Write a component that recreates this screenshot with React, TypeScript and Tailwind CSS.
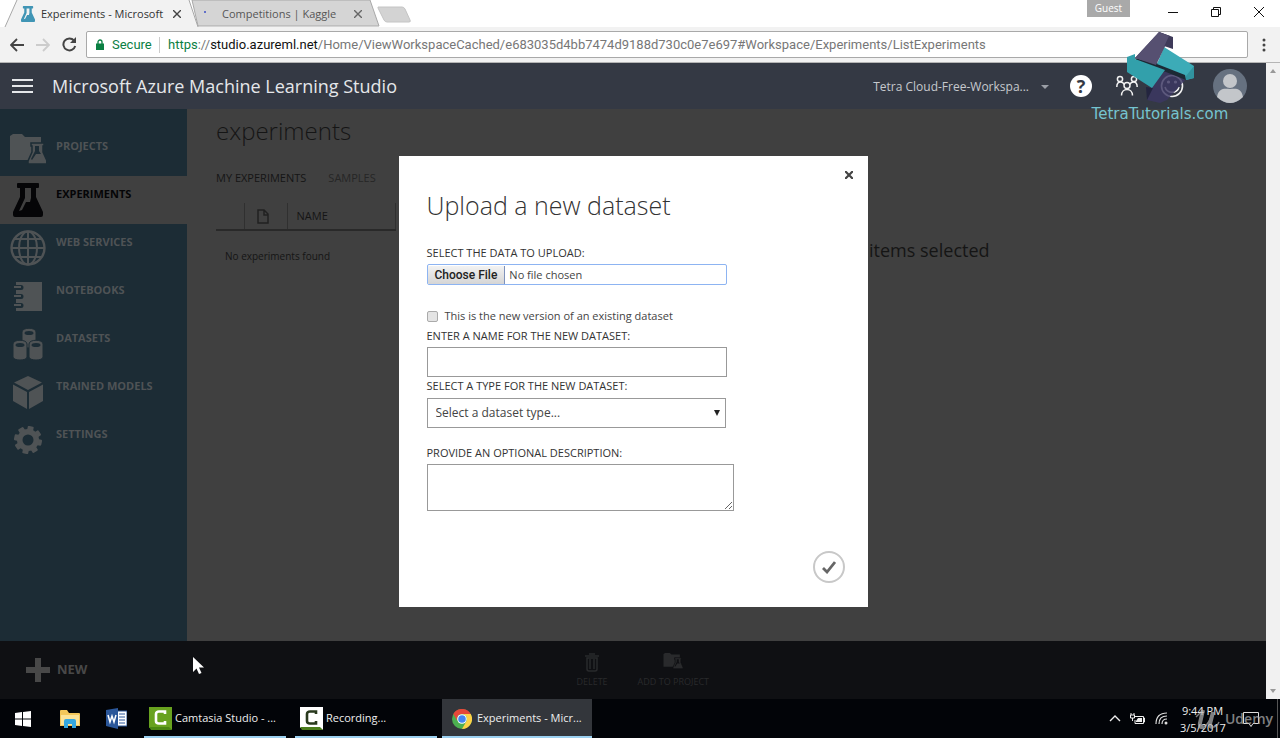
import React from "react";

function Flask({ className, fill = "currentColor" }: { className?: string; fill?: string }) {
  return (
    <svg viewBox="0 0 30 34" className={className} aria-hidden="true">
      <path
        fillRule="evenodd"
        fill={fill}
        d="M5 0h20a1 1 0 0 1 1 1v3a1 1 0 0 1-1 1h-2v9l7 15v3a2 2 0 0 1-2 2H2a2 2 0 0 1-2-2v-3l7-15V5H5a1 1 0 0 1-1-1V1a1 1 0 0 1 1-1zM12 5v10L6 28l3-1 4-8h4l1-4V5z"
      />
    </svg>
  );
}

function FolderFlask({ className, gap = "#1c2c35" }: { className?: string; gap?: string }) {
  return (
    <svg viewBox="0 0 36 36" className={className} aria-hidden="true">
      <path fill="currentColor" d="M0 2 3 0h9l3 3h16v23H0z" />
      <path fill="currentColor" stroke={gap} strokeWidth="1.5" d="M21 9h13v3h-1v6l4 9v3H18v-3l4-9v-6h-1z" />
      <path fill={gap} d="M25 12h4v5l2 3h-5l-4 6-1-1 4-8z" />
    </svg>
  );
}

function Globe({ className }: { className?: string }) {
  return (
    <svg viewBox="0 0 36 36" className={className} fill="none" stroke="currentColor" strokeWidth="2" aria-hidden="true">
      <circle cx="18" cy="18" r="16.5" strokeWidth="2.4" />
      <ellipse cx="18" cy="18" rx="9" ry="16.5" />
      <path d="M18 1v34M1 18h34M4 9h28M4 27h28" />
    </svg>
  );
}

function Notebook({ className }: { className?: string }) {
  return (
    <svg viewBox="0 0 28 29" className={className} aria-hidden="true">
      <path fill="currentColor" d="M2 0h26v29H2v-3h5a2 2 0 0 0 0-5H2v-4h5a2 2 0 0 0 0-5H2V8h5a2 2 0 0 0 0-5H2z" />
      <path fill="none" stroke="currentColor" strokeWidth="2" d="M0 5h7M0 14h7M0 23h7" />
    </svg>
  );
}

function Cylinders({ className }: { className?: string }) {
  const positions = [
    [9, 0],
    [0, 12],
    [16, 12],
  ];
  return (
    <svg viewBox="0 0 31 33" className={className} aria-hidden="true">
      {positions.map(([x, y]) => (
        <g key={`${x}-${y}`} transform={`translate(${x} ${y})`}>
          <path fill="currentColor" stroke="#1c2c35" d="M0 4c0-5 14-5 14 0v13c0 4-14 4-14 0z" />
          <ellipse cx="7" cy="5" rx="4.5" ry="2" fill="#1c2c35" />
        </g>
      ))}
    </svg>
  );
}

function Cube({ className }: { className?: string }) {
  return (
    <svg viewBox="0 0 30 33" className={className} fill="currentColor" aria-hidden="true">
      <path d="M15 0 29 6.5 15 14 1 6.5zM0 8.5l14 7.5v17L0 25zM30 8.5 16 16v17l14-8z" />
    </svg>
  );
}

function Gear({ className }: { className?: string }) {
  return (
    <svg viewBox="0 0 28 28" className={className} aria-hidden="true">
      {[0, 45, 90, 135].map((a) => (
        <rect key={a} x="11" y="0" width="6" height="28" rx="1" fill="currentColor" transform={`rotate(${a + 12} 14 14)`} />
      ))}
      <circle cx="14" cy="14" r="11" fill="currentColor" />
      <circle cx="14" cy="14" r="5.5" fill="#1c2c35" />
    </svg>
  );
}

function BrowserTabs() {
  return (
    <div className="flex h-[27px] items-start bg-white text-[11px] leading-[26px]">
      <div className="relative ml-1 flex h-[27px] w-[188px] shrink-0 items-center">
        <svg viewBox="0 0 376 27" className="absolute left-0 top-0 h-[27px] w-[376px]" aria-hidden="true">
          <path d="M188 0h178l9 26H194z" fill="#d5d5d5" stroke="#a8a8a8" />
          <path d="M1 27 13 0h172l9 27z" fill="#f2f2f2" />
          <path d="M1 27 13 0M185 0l9 27" fill="none" stroke="#a8a8a8" />
        </svg>
        <Flask className="relative ml-[17px] h-4 w-[14px]" fill="#4095b5" />
        <span className="relative ml-[6px] w-[124px] whitespace-nowrap text-[#333]">Experiments - Microsoft</span>
        <button aria-label="Close Experiments tab" className="relative ml-2">
          <svg viewBox="0 0 8 8" className="h-2 w-2" stroke="#444" strokeWidth="1.4"><path d="m0 0 8 8M8 0 0 8" /></svg>
        </button>
      </div>
      <div className="relative flex h-[27px] w-[185px] shrink-0 items-center">
        <span className="mb-1 ml-3 h-[2px] w-[2px] bg-[#6270c9]" />
        <span className="ml-4 w-[126px] whitespace-nowrap text-[#555]">Competitions | Kaggle</span>
        <button aria-label="Close Competitions tab" className="ml-[6px]">
          <svg viewBox="0 0 8 8" className="h-2 w-2" stroke="#666" strokeWidth="1.4"><path d="m0 0 8 8M8 0 0 8" /></svg>
        </button>
      </div>
      <button aria-label="New tab" className="mt-[6px]">
        <svg viewBox="0 0 34 17" className="h-[17px] w-[34px]"><path d="M1 1h24q2 0 3 2l5 11q1 2-1 2H10q-2 0-3-2L1 2z" fill="#d3d3d3" stroke="#c4c4c4" /></svg>
      </button>
      <div className="ml-auto flex items-start">
        <span className="mr-[22px] h-[17px] w-[43px] bg-[#a9a9a9] text-center text-[10px] leading-4 text-white">Guest</span>
        <button aria-label="Minimize" className="flex h-6 w-[42px] items-center justify-center"><svg viewBox="0 0 10 10" className="h-[10px] w-[10px]" stroke="#111"><path d="M0 5.5h10" /></svg></button>
        <button aria-label="Restore" className="flex h-6 w-[43px] items-center justify-center"><svg viewBox="0 0 10 10" className="h-[10px] w-[10px]" fill="none" stroke="#111"><path d="M.5 2.5h7v7h-7zM2.5 2.5v-2h7v7h-2" /></svg></button>
        <button aria-label="Close" className="flex h-6 w-[43px] items-center justify-center"><svg viewBox="0 0 10 10" className="h-[10px] w-[10px]" stroke="#111"><path d="m0 0 10 10M10 0 0 10" /></svg></button>
      </div>
    </div>
  );
}

function AddressBar() {
  return (
    <div className="flex h-9 items-center border-b border-[#b5b5b5] bg-[#f2f2f2] pl-[10px]">
      <button aria-label="Back"><svg viewBox="0 0 14 14" className="h-[14px] w-[14px]" fill="none" stroke="#444" strokeWidth="1.8"><path d="M14 7H1M7 1 1 7l6 6" /></svg></button>
      <button aria-label="Forward" className="ml-3"><svg viewBox="0 0 14 14" className="h-[14px] w-[14px]" fill="none" stroke="#ccc" strokeWidth="1.8"><path d="M0 7h13M7 1l6 6-6 6" /></svg></button>
      <button aria-label="Reload" className="ml-3"><svg viewBox="0 0 15 15" className="h-[15px] w-[15px]" fill="none" stroke="#444" strokeWidth="2"><path d="M12 3.5A6 6 0 1 0 13.2 9" /><path d="M14 0v6H8z" fill="#444" stroke="none" /></svg></button>
      <div className="ml-[9px] flex h-[27px] flex-1 items-center rounded-[2px] border border-[#a9a9a9] bg-white pl-[9px] font-['Roboto',sans-serif] text-[13px] text-[#777]">
        <svg viewBox="0 0 8 11" className="h-[11px] w-2" aria-hidden="true"><path d="M2 5V3a2 2 0 0 1 4 0v2" fill="none" stroke="#0b8043" strokeWidth="1.3" /><path d="M0 4.5h8V11H0z" fill="#0b8043" /></svg>
        <span className="ml-2 w-12 border-r border-[#ccc] leading-4 text-[#0b8043]">Secure</span>
        <span className="ml-2 whitespace-nowrap"><span className="text-[#0b8043]">https</span>://<span className="text-[#111]">studio.azureml.net</span>/Home/ViewWorkspaceCached/e683035d4bb7474d9188d730c0e7e697#Workspace/Experiments/ListExperiments</span>
      </div>
      <button aria-label="Browser menu" className="flex w-8 justify-center"><svg viewBox="0 0 4 14" className="h-[14px] w-1" fill="#444"><circle cx="2" cy="2" r="1.5" /><circle cx="2" cy="7" r="1.5" /><circle cx="2" cy="12" r="1.5" /></svg></button>
    </div>
  );
}

function StudioHeader() {
  return (
    <header className="relative flex h-[46px] items-center bg-[#343944] pl-3 text-[#e5e7ea]">
      <button aria-label="Menu" className="flex w-[21px] flex-col gap-1">
        <span className="h-[2px] bg-[#e5e7ea]" /><span className="h-[2px] bg-[#e5e7ea]" /><span className="h-[2px] bg-[#e5e7ea]" />
      </button>
      <h1 className="ml-[19px] whitespace-nowrap text-[18px]">Microsoft Azure Machine Learning Studio</h1>
      <button className="ml-auto flex items-center gap-3 pt-[2px] text-[12px] text-[#c6c9ce]">
        Tetra Cloud-Free-Workspa...
        <svg viewBox="0 0 8 4" className="h-1 w-2" fill="#9a9ea6"><path d="M0 0h8L4 4z" /></svg>
      </button>
      <button aria-label="Help" className="ml-[21px] flex h-[22px] w-[22px] items-center justify-center rounded-full bg-white text-[18px] font-bold leading-5 text-[#343944]">?</button>
      <button aria-label="Community" className="ml-6">
        <svg viewBox="0 0 22 22" className="h-[22px] w-[22px]" fill="none" stroke="#f2f2f2" strokeWidth="1.5">
          <circle cx="4" cy="4" r="2.6" /><circle cx="18" cy="4" r="2.6" /><circle cx="11" cy="10.5" r="3" />
          <path d="M.8 12c0-4 2-5 3.700-5s3 1 3.700 2.500M21.200 12c0-4-2-5-3.700-5s-3 1-3.700 2.500M5.500 20.500c0-8 11-8 11 0" />
        </svg>
      </button>
      <button aria-label="Feedback" className="ml-[22px]">
        <svg viewBox="0 0 24 24" className="h-6 w-6" fill="none" stroke="#f2f2f2" strokeWidth="1.6"><circle cx="12" cy="12" r="10.5" /><path d="M5 13c2 7 12 7 14 0" /><circle cx="8.5" cy="8" r=".8" /><circle cx="15.5" cy="8" r=".8" /></svg>
      </button>
      <button aria-label="Account" className="ml-[29px] mr-[19px]">
        <svg viewBox="0 0 34 34" className="h-[34px] w-[34px]"><circle cx="17" cy="17" r="17" fill="#667180" /><circle cx="17" cy="12" r="7" fill="#c3c6ca" /><path d="M4 28c2-10 8-8 13-8s11-2 13 8q-13 12-26 0z" fill="#c3c6ca" /></svg>
      </button>
      <div className="pointer-events-none absolute right-[35px] top-[-32px] flex w-[142px] flex-col items-center gap-[3px]">
        <svg viewBox="0 0 68 72" className="h-[72px] w-[68px]" aria-hidden="true">
          <path d="M39 40 62 46 41 69l-7 3-13-3 2-12z" fill="#3c3763" fillOpacity=".82" />
          <path d="m20 56 7 1-6 12z" fill="#23253f" />
          <path d="m9 27 22 5 31 12-2 5-50-20z" fill="#1c2934" />
          <path d="m1 26 8-3v5l30 11-13 18L1 41z" fill="#32a0ab" />
          <path d="m38 16 30 19v12l-8 2-1-5-28-11z" fill="#3cabb7" />
          <path d="m60 45 8-10v12l-8 2z" fill="#31939f" />
          <path d="M33 1 44 5 30 34 9 27z" fill="#565071" />
          <path d="m33 1 14 5v12l-9-3-6 11z" fill="#3e3a59" />
          <path d="M33 1 43 5 30 33 9 27z" fill="#565071" />
        </svg>
        <span className="whitespace-nowrap font-['DejaVu_Sans'] text-[15px] leading-4 text-[#75c4d0]">TetraTutorials.com</span>
      </div>
    </header>
  );
}

const navItems = [
  { label: "PROJECTS", icon: <FolderFlask className="h-9 w-9" /> },
  { label: "EXPERIMENTS", icon: <Flask className="h-[34px] w-[30px]" />, active: true },
  { label: "WEB SERVICES", icon: <Globe className="h-9 w-9" /> },
  { label: "NOTEBOOKS", icon: <Notebook className="h-[29px] w-7" /> },
  { label: "DATASETS", icon: <Cylinders className="h-[33px] w-[31px]" /> },
  { label: "TRAINED MODELS", icon: <Cube className="h-[33px] w-[30px]" /> },
  { label: "SETTINGS", icon: <Gear className="h-7 w-7" /> },
];

function Sidebar() {
  return (
    <nav className="w-[187px] shrink-0 bg-[#1c2c35] pt-[19px]">
      {navItems.map((item) => (
        <a
          key={item.label}
          href="#"
          className={item.active ? "flex h-12 items-center bg-[#404040] text-[#050507]" : "flex h-12 items-center text-[#4f5355]"}
        >
          <span className="flex w-14 justify-center">{item.icon}</span>
          <span className="mb-3 text-[11px] font-bold leading-4">{item.label}</span>
        </a>
      ))}
    </nav>
  );
}

function ExperimentList() {
  return (
    <main className="flex flex-1 bg-[#404040] pl-[29px] text-[#151515]">
      <section className="w-[180px] shrink-0">
        <h2 className="pt-1 text-[24px] font-light leading-9">experiments</h2>
        <div className="mt-5 flex gap-[22px] text-[11px] leading-[18px]">
          <button>MY EXPERIMENTS</button>
          <button className="text-[#262626]">SAMPLES</button>
        </div>
        <table className="mt-4 w-full text-left text-[11px]">
          <thead>
            <tr className="h-[27px] border-b-2 border-[#292929]">
              <th className="w-7" />
              <th className="w-[43px] border-x border-[#303030]" aria-label="Type">
                <svg viewBox="0 0 12 15" className="ml-3 h-[15px] w-3" fill="none" stroke="#202020" strokeWidth="1.5"><path d="M1 1h6l4 4v9H1zM7 1v5h4" /></svg>
              </th>
              <th className="border-r border-[#303030] pl-[9px] font-normal">NAME</th>
            </tr>
          </thead>
          <tbody>
            <tr><td colSpan={3} className="pl-[9px] pt-[17px] text-[10px] leading-4">No experiments found</td></tr>
          </tbody>
        </table>
      </section>
      <aside className="flex-1 whitespace-nowrap pl-[444px] pt-[127px] text-[18px] leading-7">No items selected</aside>
    </main>
  );
}

function CommandBar() {
  return (
    <footer className="flex h-[58px] items-center bg-[#0f1013] pl-[26px] text-[#484848]">
      <button className="flex items-center gap-[7px] text-[13px] font-bold">
        <svg viewBox="0 0 24 24" className="h-6 w-6" fill="currentColor"><path d="M9 0h6v9h9v6h-9v9H9v-9H0V9h9z" /></svg>
        NEW
      </button>
      <div className="flex flex-1 justify-center gap-[30px] pr-[68px] text-[9px] leading-3 text-[#292a2c]">
        <button className="flex flex-col items-center gap-1">
          <svg viewBox="0 0 14 19" className="h-[19px] w-[14px]" fill="none" stroke="currentColor" strokeWidth="1.5"><path d="M0 3h14M4 1h6M2 5v11q0 2 2 2h6q2 0 2-2V5zM5 6v10M9 6v10" /></svg>
          DELETE
        </button>
        <button className="flex flex-col items-center gap-1"><FolderFlask className="h-[19px] w-5" gap="#0f1013" />ADD TO PROJECT</button>
      </div>
    </footer>
  );
}

const label = "text-[11px] leading-4 text-[#333]";

function UploadDialog() {
  return (
    <div className="absolute inset-0 flex items-center justify-center">
      <form role="dialog" aria-labelledby="upload-title" className="relative mt-[1px] flex h-[451px] w-[469px] flex-col items-start bg-white px-7 pt-[31px]" onSubmit={(e) => e.preventDefault()}>
        <button type="button" aria-label="Close dialog" className="absolute right-[15px] top-[15px]">
          <svg viewBox="0 0 8 8" className="h-2 w-2" stroke="#444" strokeWidth="2.2"><path d="m0 0 8 8M8 0 0 8" /></svg>
        </button>
        <h2 id="upload-title" className="text-[25px] font-light leading-9 text-[#333]">Upload a new dataset</h2>
        <label htmlFor="file" className={`mt-[22px] ${label}`}>SELECT THE DATA TO UPLOAD:</label>
        <input id="file" type="file" className="mt-[3px] h-[21px] w-[300px] rounded-[2px] border border-[#8db4f2] text-[11px] leading-[19px] text-[#444] file:mr-1 file:h-[19px] file:border-r file:border-solid file:border-[#7e92bb] file:bg-linear-to-b file:from-[#f2f2f2] file:to-[#d4d4d4] file:px-[7px] file:font-['Roboto',sans-serif] file:text-[12px] file:font-medium file:leading-[18px] file:text-[#222]" />
        <div className="mt-[23px] flex items-center gap-[7px]">
          <input id="version" type="checkbox" className="h-[11px] w-[11px] appearance-none rounded-[2px] border border-[#aaa] bg-[#e4e4e4]" />
          <label htmlFor="version" className="text-[11px] leading-4 text-[#444]">This is the new version of an existing dataset</label>
        </div>
        <label htmlFor="name" className={`mt-1 ${label}`}>ENTER A NAME FOR THE NEW DATASET:</label>
        <input id="name" className="mt-[3px] h-[30px] w-[300px] border border-[#999] px-2 text-[12px]" />
        <label htmlFor="type" className={`mt-[1px] ${label}`}>SELECT A TYPE FOR THE NEW DATASET:</label>
        <div className="relative mt-1">
          <select id="type" className="block h-[30px] w-[299px] appearance-none border border-[#999] bg-white px-2 text-[12px] text-[#444]"><option>Select a dataset type...</option></select>
          <svg viewBox="0 0 6 6" className="pointer-events-none absolute right-[6px] top-3 h-[6px] w-[6px]" fill="#222"><path d="M0 0h6L3 6z" /></svg>
        </div>
        <label htmlFor="description" className={`mt-[17px] ${label}`}>PROVIDE AN OPTIONAL DESCRIPTION:</label>
        <textarea id="description" className="mt-[3px] h-[47px] w-[307px] border border-[#999]" />
        <button aria-label="Confirm" className="absolute bottom-6 right-[23px] flex h-8 w-8 items-center justify-center rounded-full border-2 border-[#c8c8c8]">
          <svg viewBox="0 0 14 13" className="h-[13px] w-[14px]" fill="none" stroke="#666" strokeWidth="2.8"><path d="m1 7 4 4 8-10" /></svg>
        </button>
      </form>
    </div>
  );
}

function Pointer() {
  return (
    <svg viewBox="0 0 11 18" className="pointer-events-none absolute bottom-[24px] left-[193px] h-[18px] w-[11px]" aria-hidden="true">
      <path d="M0 0v15l3.500-3.500L6 17l2.500-1-2.500-5.500h5z" fill="#fff" />
    </svg>
  );
}

function CamtasiaIcon({ light = false }: { light?: boolean }) {
  return (
    <svg viewBox="0 0 23 23" className="h-[23px] w-[23px]" aria-hidden="true">
      <path d="M0 0h23v23l-3-2H0z" fill={light ? "#fff" : "#68a21f"} />
      <path d="M0 20h20l3 3H2z" fill={light ? "#4b7d1c" : "#4b8712"} />
      <path d="M16 7V4.500H10Q7 4.500 7 7v7q0 2.500 3 2.500h6V14" fill="none" stroke={light ? "#29391d" : "#fff"} strokeWidth="2.6" />
    </svg>
  );
}

function Taskbar() {
  return (
    <div className="flex h-[39px] items-stretch bg-[#020408] text-[11px] text-[#eee]">
      <button aria-label="Start" className="ml-[15px] flex items-center"><svg viewBox="0 0 16 16" className="h-4 w-4" fill="#fff"><path d="m0 2 7-1v6.500H0zM8 1l8-1v7.500H8zM0 8.500h7V15l-7-1zM8 8.500h8V16l-8-1z" /></svg></button>
      <button aria-label="File Explorer" className="ml-[29px] flex items-center"><svg viewBox="0 0 20 18" className="h-[18px] w-5"><path d="M0 1q0-1 1-1h6l2 3h10q1 0 1 1v12H0z" fill="#f3c75a" /><path d="M1 5h18v10H1z" fill="#fce397" /><path d="M4 18v-7q0-2 2-2h8q2 0 2 2v7h-4v-4H8v4z" fill="#35a7df" /></svg></button>
      <button aria-label="Word" className="ml-[26px] flex items-center">
        <svg viewBox="0 0 21 21" className="h-[21px] w-[21px]"><path d="M11 3h10v15H11z" fill="#fff" stroke="#2b579a" /><path d="M13 6h6M13 9h6M13 12h6M13 15h6" stroke="#2b579a" /><path d="m0 2 12-2v21L0 18z" fill="#2b579a" /><path d="m2 7 2 7 2-6 2 6 2-7" fill="none" stroke="#fff" strokeWidth="1.5" /></svg>
      </button>
      <button className="ml-[17px] flex w-[142px] items-center gap-[3px] whitespace-nowrap border-b-2 border-[#9bd0f0] pl-[5px] pt-[2px]"><CamtasiaIcon />Camtasia Studio - ...</button>
      <button className="ml-[9px] flex w-[142px] items-center gap-[3px] whitespace-nowrap border-b-2 border-[#9bd0f0] pl-[5px] pt-[2px]"><CamtasiaIcon light />Recording...</button>
      <button className="ml-[5px] flex w-[150px] items-center gap-[5px] whitespace-nowrap border-b-2 border-[#9bd0f0] bg-[#33363b] pl-[10px] pt-[2px]">
        <svg viewBox="0 0 20 20" className="h-5 w-5" aria-hidden="true"><circle cx="10" cy="10" r="10" fill="#4caf50" /><path d="M1.300 5A10 10 0 0 1 18.700 5H10a5 5 0 0 0-4.300 7.500z" fill="#e5473a" /><path d="M18.700 5A10 10 0 0 1 10 20l4.300-7.500A5 5 0 0 0 10 5z" fill="#fdd247" /><circle cx="10" cy="10" r="4.800" fill="#fff" /><circle cx="10" cy="10" r="3.800" fill="#4285f4" /></svg>
        Experiments - Micr...
      </button>
      <div className="relative ml-auto flex items-center border-r border-[#555] mr-[2px]">
        <button aria-label="Hidden icons"><svg viewBox="0 0 12 7" className="h-[7px] w-3" fill="none" stroke="#eee" strokeWidth="1.4"><path d="m1 6 5-5 5 5" /></svg></button>
        <svg viewBox="0 0 15 12" className="ml-[9px] h-3 w-[15px]" fill="none" stroke="#eee" aria-hidden="true"><path d="M5 3.500h8.500v7H5V7M13.500 5h1v4h-1M1 0v2M4 0v2M.5 2h4v3h-4zM2.500 5v3" /><path d="M8 5h4v4H6V8z" fill="#eee" stroke="none" /></svg>
        <svg viewBox="0 0 13 13" className="ml-[10px] h-[13px] w-[13px]" fill="none" stroke="#ddd" strokeWidth="1.2" aria-hidden="true"><path d="M1 12Q1 1 12 1M4 12q0-8 8-8M7 12q0-5 5-5" /><circle cx="11" cy="11" r="1.5" fill="#ddd" stroke="none" /></svg>
        <time className="ml-3 w-[45px] whitespace-nowrap text-center text-[11px] leading-[17px]">9:44 PM<br />3/5/2017</time>
        <button aria-label="Notifications" className="ml-[18px] mr-[18px]"><svg viewBox="0 0 16 16" className="h-4 w-4" fill="none" stroke="#ddd"><path d="M.5 1.500h15v11H10l-2 3-2-3H.5z" /></svg></button>
        <div className="pointer-events-none absolute right-1 flex items-center gap-[5px] text-[14px] font-semibold text-[#b5b5b5] opacity-70">
          <svg viewBox="0 0 25 20" className="h-5 w-[25px]" fill="none" stroke="currentColor" aria-hidden="true"><path d="M1 8 8 1" strokeWidth="1.500" /><path d="M8 1 5 14q-1 5 4 4" strokeWidth="4" /><path d="M9 18Q14 15 18 3" strokeWidth="1.500" /><path d="m18 3-3 12q0 3 3 3" strokeWidth="4" /><path d="M18 18q4 0 6-5" strokeWidth="1.500" /></svg>
          Udemy
        </div>
      </div>
    </div>
  );
}

export default function App() {
  return (
    <div className="flex min-h-screen flex-col overflow-hidden bg-[#404040] font-['Open_Sans','Noto_Sans',sans-serif]">
      <BrowserTabs />
      <AddressBar />
      <div className="flex flex-1">
        <div className="relative flex min-w-0 flex-1 flex-col">
          <StudioHeader />
          <div className="flex flex-1"><Sidebar /><ExperimentList /></div>
          <CommandBar />
          <UploadDialog />
          <Pointer />
        </div>
        <div className="flex w-[14px] flex-col items-center justify-between bg-[#f1f1f1] py-[6px]" aria-hidden="true">
          <svg viewBox="0 0 6 4" className="h-1 w-[6px]" fill="#999"><path d="m0 4 3-4 3 4z" /></svg>
          <svg viewBox="0 0 6 4" className="h-1 w-[6px]" fill="#999"><path d="m0 0 3 4 3-4z" /></svg>
        </div>
      </div>
      <Taskbar />
    </div>
  );
}
